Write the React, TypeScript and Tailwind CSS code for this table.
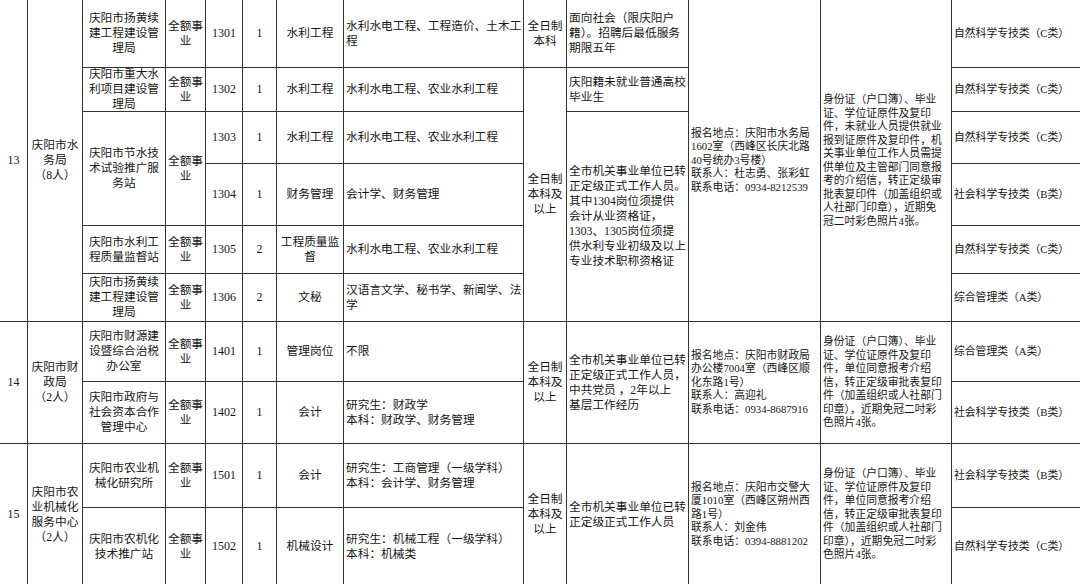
const colStart: Record<number, string> = {
  1: "col-start-1",
  2: "col-start-2",
  3: "col-start-3",
  4: "col-start-4",
  5: "col-start-5",
  6: "col-start-6",
  7: "col-start-7",
  8: "col-start-8",
  9: "col-start-9",
  10: "col-start-10",
  11: "col-start-11",
  12: "col-start-12",
  13: "col-start-13",
};

const rowStart: Record<number, string> = {
  1: "row-start-1",
  2: "row-start-2",
  3: "row-start-3",
  4: "row-start-4",
  5: "row-start-5",
  6: "row-start-6",
  7: "row-start-7",
  8: "row-start-8",
  9: "row-start-9",
  10: "row-start-10",
};

const rowSpan: Record<number, string> = {
  1: "row-span-1",
  2: "row-span-2",
  4: "row-span-4",
  5: "row-span-5",
  6: "row-span-6",
};

type CellProps = {
  c: number;
  r: number;
  s?: number;
  t: string;
  left?: boolean;
  sm?: boolean;
  num?: boolean;
};

function Cell({ c, r, s = 1, t, left, sm, num }: CellProps) {
  return (
    <div
      className={[
        colStart[c],
        rowStart[r],
        rowSpan[s],
        "flex items-center overflow-hidden border-r border-b border-[#333] whitespace-pre-line",
        left ? "justify-start text-left pl-[2px]" : "justify-center text-center",
        sm ? "text-[10.8px] leading-[13.5px]" : "text-[11.7px] leading-[15px]",
        num ? "font-['Liberation_Serif',serif] text-[12px]" : "",
      ].join(" ")}
    >
      <div>{t}</div>
    </div>
  );
}

type Post = {
  unit?: string;
  unitSpan?: number;
  code: string;
  n: string;
  post: string;
  major: string;
  cat: string;
};

const posts: Post[] = [
  { unit: "庆阳市扬黄续\n建工程建设管\n理局", code: "1301", n: "1", post: "水利工程", major: "水利水电工程、工程造价、土木工\n程", cat: "自然科学专技类（C类）" },
  { unit: "庆阳市重大水\n利项目建设管\n理局", code: "1302", n: "1", post: "水利工程", major: "水利水电工程、农业水利工程", cat: "自然科学专技类（C类）" },
  { unit: "庆阳市节水技\n术试验推广服\n务站", unitSpan: 2, code: "1303", n: "1", post: "水利工程", major: "水利水电工程、农业水利工程", cat: "自然科学专技类（C类）" },
  { code: "1304", n: "1", post: "财务管理", major: "会计学、财务管理", cat: "社会科学专技类（B类）" },
  { unit: "庆阳市水利工\n程质量监督站", code: "1305", n: "2", post: "工程质量监\n督", major: "水利水电工程、农业水利工程", cat: "自然科学专技类（C类）" },
  { unit: "庆阳市扬黄续\n建工程建设管\n理局", code: "1306", n: "2", post: "文秘", major: "汉语言文学、秘书学、新闻学、法\n学", cat: "综合管理类（A类）" },
  { unit: "庆阳市财源建\n设暨综合治税\n办公室", code: "1401", n: "1", post: "管理岗位", major: "不限", cat: "综合管理类（A类）" },
  { unit: "庆阳市政府与\n社会资本合作\n管理中心", code: "1402", n: "1", post: "会计", major: "研究生：财政学\n本科：财政学、财务管理", cat: "社会科学专技类（B类）" },
  { unit: "庆阳市农业机\n械化研究所", code: "1501", n: "1", post: "会计", major: "研究生：工商管理（一级学科）\n本科：会计学、财务管理", cat: "社会科学专技类（B类）" },
  { unit: "庆阳市农机化\n技术推广站", code: "1502", n: "1", post: "机械设计", major: "研究生：机械工程（一级学科）\n本科：机械类", cat: "自然科学专技类（C类）" },
];

const docs =
  "身份证（户口簿）、毕业\n证、学位证原件及复印\n件，单位同意报考介绍\n信，转正定级审批表复印\n件（加盖组织或人社部门\n印章），近期免冠二吋彩\n色照片4张。";

// group-level cells: seq, department, education, requirements, contact, documents
const groupCells: CellProps[] = [
  { c: 1, r: 1, s: 6, t: "13", num: true },
  { c: 2, r: 1, s: 6, t: "庆阳市水\n务局\n（8人）" },
  { c: 9, r: 1, t: "全日制\n本科" },
  { c: 9, r: 2, s: 5, t: "全日制\n本科及\n以上" },
  { c: 10, r: 1, left: true, t: "面向社会（限庆阳户\n籍）。招聘后最低服务\n期限五年" },
  { c: 10, r: 2, left: true, t: "庆阳籍未就业普通高校\n毕业生" },
  {
    c: 10,
    r: 3,
    s: 4,
    left: true,
    t: "全市机关事业单位已转\n正定级正式工作人员。\n其中1304岗位须提供\n会计从业资格证，\n1303、1305岗位须提\n供水利专业初级及以上\n专业技术职称资格证",
  },
  {
    c: 11,
    r: 1,
    s: 6,
    left: true,
    sm: true,
    t: "报名地点：庆阳市水务局\n1602室（西峰区长庆北路\n40号统办3号楼）\n联系人：杜志勇、张彩虹\n联系电话：0934-8212539",
  },
  {
    c: 12,
    r: 1,
    s: 6,
    left: true,
    sm: true,
    t: "身份证（户口簿）、毕业\n证、学位证原件及复印\n件，未就业人员提供就业\n报到证原件及复印件，机\n关事业单位工作人员需提\n供单位及主管部门同意报\n考的介绍信，转正定级审\n批表复印件（加盖组织或\n人社部门印章），近期免\n冠二吋彩色照片4张。",
  },

  { c: 1, r: 7, s: 2, t: "14", num: true },
  { c: 2, r: 7, s: 2, t: "庆阳市财\n政局\n（2人）" },
  { c: 9, r: 7, s: 2, t: "全日制\n本科及\n以上" },
  { c: 10, r: 7, s: 2, left: true, t: "全市机关事业单位已转\n正定级正式工作人员，\n中共党员 ，2年以上\n基层工作经历" },
  {
    c: 11,
    r: 7,
    s: 2,
    left: true,
    sm: true,
    t: "报名地点：庆阳市财政局\n办公楼7004室（西峰区顺\n化东路1号）\n联系人：高迎礼\n联系电话：0934-8687916",
  },
  { c: 12, r: 7, s: 2, left: true, sm: true, t: docs },

  { c: 1, r: 9, s: 2, t: "15", num: true },
  { c: 2, r: 9, s: 2, t: "庆阳市农\n业机械化\n服务中心\n（2人）" },
  { c: 9, r: 9, s: 2, t: "全日制\n本科及\n以上" },
  { c: 10, r: 9, s: 2, left: true, t: "全市机关事业单位已转\n正定级正式工作人员" },
  {
    c: 11,
    r: 9,
    s: 2,
    left: true,
    sm: true,
    t: "报名地点：庆阳市交警大\n厦1010室（西峰区朔州西\n路1号）\n联系人：刘金伟\n联系电话：0394-8881202",
  },
  { c: 12, r: 9, s: 2, left: true, sm: true, t: docs },
];

export default function App() {
  return (
    <div className="w-[1080px] h-[584px] overflow-hidden bg-white text-[#161616] font-['Liberation_Serif','Noto_Sans_CJK_SC',serif]">
      <div className="grid w-[1092px] grid-cols-[28px_55px_83px_40px_37px_34px_67px_180px_43px_122px_132px_131px_140px] grid-rows-[68px_44px_52px_62px_48px_48px_60px_62px_64px_78px]">
        {groupCells.map((g, i) => (
          <Cell key={"g" + i} {...g} />
        ))}
        {posts.map((p, i) => {
          const r = i + 1;
          return [
            p.unit ? <Cell key={p.code + "u"} c={3} r={r} s={p.unitSpan ?? 1} t={p.unit} /> : null,
            p.unit ? <Cell key={p.code + "k"} c={4} r={r} s={p.unitSpan ?? 1} t={"全额事\n业"} /> : null,
            <Cell key={p.code + "c"} c={5} r={r} t={p.code} num />,
            <Cell key={p.code + "n"} c={6} r={r} t={p.n} num />,
            <Cell key={p.code + "p"} c={7} r={r} t={p.post} />,
            <Cell key={p.code + "m"} c={8} r={r} t={p.major} left />,
            <Cell key={p.code + "t"} c={13} r={r} t={p.cat} left sm />,
          ];
        })}
      </div>
    </div>
  );
}
